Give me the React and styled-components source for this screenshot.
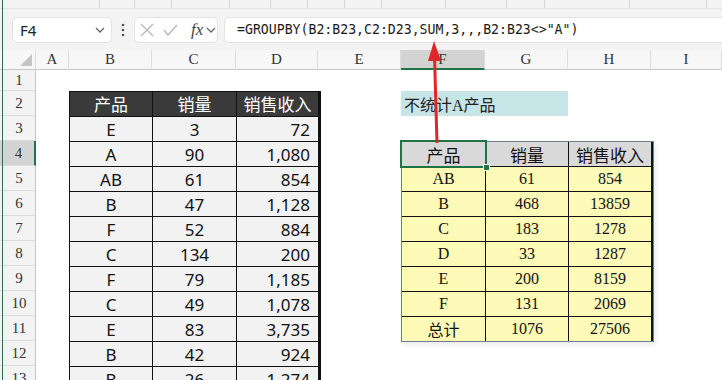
import React from "react";
import styled, { createGlobalStyle } from "styled-components";

const GlobalStyle = createGlobalStyle`
  html, body {
    margin: 0;
    padding: 0;
    background: #ffffff;
  }
  body {
    overflow: hidden;
  }
`;

// ribbon remnant separators (widths between the thin lines at the top)
const RIBBON = [100, 35, 37, 58, 41, 37, 37, 37, 64, 61, 38, 85, 77];
const COLS = ["A", "B", "C", "D", "E", "F", "G", "H", "I"];
const ROWS = [1, 2, 3, 4, 5, 6, 7, 8, 9, 10, 11, 12, 13];

const sales = [
  ["E", "3", "72"],
  ["A", "90", "1,080"],
  ["AB", "61", "854"],
  ["B", "47", "1,128"],
  ["F", "52", "884"],
  ["C", "134", "200"],
  ["F", "79", "1,185"],
  ["C", "49", "1,078"],
  ["E", "83", "3,735"],
  ["B", "42", "924"],
  ["B", "26", "1,274"],
];

const grouped = [
  ["AB", "61", "854"],
  ["B", "468", "13859"],
  ["C", "183", "1278"],
  ["D", "33", "1287"],
  ["E", "200", "8159"],
  ["F", "131", "2069"],
  ["总计", "1076", "27506"],
];

const FORMULA = '=GROUPBY(B2:B23,C2:D23,SUM,3,,,B2:B23<>"A")';

const Chevron = () => (
  <svg width="10" height="6" viewBox="0 0 10 6">
    <polyline points="1,1 5,5 9,1" fill="none" stroke="#666" strokeWidth="1.3" />
  </svg>
);

export default function App() {
  return (
    <Window>
      <GlobalStyle />
      <Ribbon>
        {RIBBON.map((w, i) => (
          <RibbonSeg key={i} $w={w} />
        ))}
      </Ribbon>

      <FormulaBar>
        <NameBox>
          <span>F4</span>
          <Chevron />
        </NameBox>
        <Grip>
          <svg width="4" height="14" viewBox="0 0 4 14">
            <circle cx="2" cy="2" r="1.3" fill="#555" />
            <circle cx="2" cy="7" r="1.3" fill="#555" />
            <circle cx="2" cy="12" r="1.3" fill="#555" />
          </svg>
        </Grip>
        <FuncBox>
          <svg width="14" height="14" viewBox="0 0 14 14">
            <path d="M1 1 L13 13 M13 1 L1 13" stroke="#b8b8b8" strokeWidth="1.4" />
          </svg>
          <svg width="15" height="12" viewBox="0 0 15 12">
            <polyline points="1,6 5,11 14,1" fill="none" stroke="#b8b8b8" strokeWidth="1.4" />
          </svg>
          <Fx>fx</Fx>
          <Chevron />
        </FuncBox>
        <FormulaInput>{FORMULA}</FormulaInput>
      </FormulaBar>

      <Sheet>
        <Corner>
          <svg width="12" height="12" viewBox="0 0 12 12">
            <polygon points="12,0 12,12 0,12" fill="#c4c4c4" />
          </svg>
        </Corner>
        {COLS.map((c) => (
          <ColHead key={c} $active={c === "F"}>
            {c}
          </ColHead>
        ))}

        {ROWS.map((r) => (
          <RowHead key={r} $row={r + 1} $active={r === 4}>
            {r}
          </RowHead>
        ))}

        <SalesTable>
          <DarkHead>产品</DarkHead>
          <DarkHead>销量</DarkHead>
          <DarkHead>销售收入</DarkHead>
          {sales.map((row, i) => (
            <React.Fragment key={i}>
              <SalesCell>{row[0]}</SalesCell>
              <SalesCell>{row[1]}</SalesCell>
              <SalesCell $right>{row[2]}</SalesCell>
            </React.Fragment>
          ))}
        </SalesTable>

        <NoteCell>不统计A产品</NoteCell>

        <GroupTable>
          <GroupHead $selected>产品</GroupHead>
          <GroupHead>销量</GroupHead>
          <GroupHead>销售收入</GroupHead>
          {grouped.map((row, i) => (
            <React.Fragment key={i}>
              <GroupCell>{row[0]}</GroupCell>
              <GroupCell>{row[1]}</GroupCell>
              <GroupCell>{row[2]}</GroupCell>
            </React.Fragment>
          ))}
        </GroupTable>
      </Sheet>

      <Arrow width="722" height="380" viewBox="0 0 722 380">
        <line x1="437" y1="143" x2="434.5" y2="56" stroke="#e0262b" strokeWidth="3" />
        <polygon points="434,41 428,61 441,61" fill="#e0262b" />
      </Arrow>
    </Window>
  );
}

const Window = styled.div`
  position: relative;
  width: 722px;
  height: 380px;
  overflow: hidden;
  background: #ffffff;
  display: flex;
  flex-direction: column;

  & > * {
    flex-shrink: 0;
  }

  &::before {
    content: "";
    position: absolute;
    left: 2px;
    top: 0;
    bottom: 0;
    width: 1px;
    background: #2f6e4a;
    z-index: 3;
  }
`;

const Ribbon = styled.div`
  height: 9px;
  display: flex;
  background: #f3f3f3;
  border-bottom: 1px solid #e2e2e2;
  box-sizing: border-box;
`;

const RibbonSeg = styled.div`
  width: ${(p) => p.$w}px;
  flex: none;
  border-right: 1px solid #d6d6d6;
  box-sizing: border-box;
`;

const FormulaBar = styled.div`
  height: 41px;
  display: flex;
  align-items: center;
  padding-left: 12px;
  background: #f3f3f3;
  box-sizing: border-box;
`;

const NameBox = styled.div`
  width: 100px;
  height: 26px;
  box-sizing: border-box;
  display: flex;
  align-items: center;
  justify-content: space-between;
  padding: 0 6px 0 7px;
  background: #ffffff;
  border: 1px solid #e2e2e2;
  border-radius: 5px;
  font-family: "Noto Sans", sans-serif;
  font-size: 15px;
  color: #222;
`;

const Grip = styled.div`
  width: 22px;
  display: flex;
  justify-content: center;
`;

const FuncBox = styled.div`
  width: 84px;
  height: 26px;
  box-sizing: border-box;
  display: flex;
  align-items: center;
  gap: 9px;
  padding-left: 5px;
  background: #ffffff;
  border: 1px solid #e2e2e2;
  border-radius: 5px;

  svg:last-child {
    margin-left: -6px;
  }
`;

const Fx = styled.span`
  font-family: "Liberation Serif", serif;
  font-style: italic;
  font-size: 17px;
  color: #444;
  margin-left: 4px;
`;

const FormulaInput = styled.div`
  flex: 1;
  height: 26px;
  margin-left: 6px;
  box-sizing: border-box;
  display: flex;
  align-items: center;
  padding-left: 12px;
  background: #ffffff;
  border: 1px solid #e2e2e2;
  border-right: none;
  border-radius: 5px 0 0 5px;
  font-family: "DejaVu Sans Mono", monospace;
  font-size: 13.2px;
  color: #1a1a1a;
  white-space: nowrap;
`;

const Sheet = styled.div`
  display: grid;
  grid-template-columns: 36px 33px 83px 84px 82px 83px 84px 83px 83px 1fr;
  grid-template-rows: 20px 21px repeat(12, 25px);
  background: #ffffff;
`;

const Corner = styled.div`
  grid-row: 1;
  grid-column: 1;
  background: #f7f7f7;
  border-bottom: 1px solid #c6c6c6;
  border-right: 1px solid #dcdcdc;
  box-sizing: border-box;
  display: flex;
  align-items: flex-end;
  justify-content: flex-end;
  padding: 0 3px 3px 0;
`;

const ColHead = styled.div`
  grid-row: 1;
  background: ${(p) => (p.$active ? "#d3d3d3" : "#f7f7f7")};
  border-right: 1px solid #dcdcdc;
  border-bottom: ${(p) => (p.$active ? "2px solid #217346" : "1px solid #c6c6c6")};
  box-sizing: border-box;
  display: flex;
  align-items: center;
  justify-content: center;
  font-family: "Liberation Serif", serif;
  font-size: 15px;
  color: #333;
`;

const RowHead = styled.div`
  grid-column: 1;
  grid-row: ${(p) => p.$row};
  background: ${(p) => (p.$active ? "#d3d3d3" : "#f3f3f3")};
  border-bottom: 1px solid #dcdcdc;
  border-right: ${(p) => (p.$active ? "2px solid #217346" : "1px solid #c6c6c6")};
  box-sizing: border-box;
  display: flex;
  align-items: center;
  justify-content: center;
  padding-left: 3px;
  font-family: "Liberation Serif", serif;
  font-size: 15px;
  color: #333;
`;

const SalesTable = styled.div`
  grid-column: 3 / 6;
  grid-row: 3 / 15;
  align-self: start;
  width: 250px;
  display: grid;
  grid-template-columns: 82px 83px 81px;
  grid-auto-rows: 24px;
  gap: 1px;
  background: #111;
  border: 1px solid #111;
  font-family: "Noto Sans", "Noto Sans CJK SC", sans-serif;
  font-size: 17px;
`;

const DarkHead = styled.div`
  background: #3a3a3a;
  color: #ffffff;
  display: flex;
  align-items: center;
  justify-content: center;
  line-height: 1;
`;

const SalesCell = styled.div`
  background: #f2f2f2;
  color: #111;
  display: flex;
  align-items: center;
  justify-content: ${(p) => (p.$right ? "flex-end" : "center")};
  padding-right: ${(p) => (p.$right ? "8px" : "0")};
  line-height: 1;
`;

const NoteCell = styled.div`
  grid-column: 7 / 9;
  grid-row: 3;
  background: #c7e4e7;
  display: flex;
  align-items: center;
  padding-left: 3px;
  font-family: "Liberation Serif", "Noto Sans CJK SC", serif;
  font-size: 16px;
  color: #222;
`;

const GroupTable = styled.div`
  grid-column: 7 / 10;
  grid-row: 5 / 13;
  align-self: start;
  width: 251px;
  display: grid;
  grid-template-columns: 83px 82px 82px;
  grid-auto-rows: 24px;
  gap: 1px;
  background: #111;
  border: 1px solid #6d7d93;
  box-shadow: 2px 3px 5px rgba(0, 0, 0, 0.08);
  font-family: "Liberation Serif", "Noto Sans CJK SC", serif;
  font-size: 16px;
  color: #111;
`;

const GroupHead = styled.div`
  position: relative;
  background: #d9d9d9;
  display: flex;
  align-items: center;
  justify-content: center;
  font-size: 17px;

  ${(p) =>
    p.$selected &&
    `
    &::after {
      content: "";
      position: absolute;
      inset: -2px;
      border: 2px solid #217346;
      z-index: 2;
    }
    &::before {
      content: "";
      position: absolute;
      right: -5px;
      bottom: -5px;
      width: 5px;
      height: 5px;
      background: #217346;
      border: 1px solid #ffffff;
      z-index: 3;
    }
  `}
`;

const GroupCell = styled.div`
  background: #fdf9b6;
  display: flex;
  align-items: center;
  justify-content: center;
`;

const Arrow = styled.svg`
  position: absolute;
  left: 0;
  top: 0;
  pointer-events: none;
  z-index: 4;
`;
